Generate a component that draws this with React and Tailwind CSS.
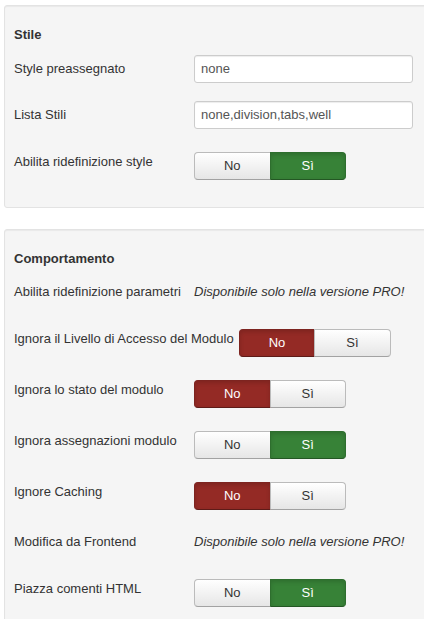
import React from 'react';

const Toggle = ({ value }) => {
  const off = 'bg-gradient-to-b from-white to-[#e6e6e6] text-[#333] border border-[#bbb] border-b-[#a2a2a2]';
  const no = value === 'no'
    ? 'bg-[#942a25] text-white border border-[#7d2420] border-b-[#5e1b18] shadow-[inset_0_2px_4px_rgba(0,0,0,0.15)]'
    : off;
  const si = value === 'si'
    ? 'bg-[#378237] text-white border border-[#2e6e2e] border-b-[#245724] shadow-[inset_0_2px_4px_rgba(0,0,0,0.15)]'
    : off;
  return (
    <div className="flex h-[28px] w-[152px] text-[13px] leading-[18px]">
      <div className={`flex-1 flex items-center justify-center rounded-l-[4px] ${no}`}>No</div>
      <div className={`flex-1 flex items-center justify-center rounded-r-[4px] -ml-px ${si}`}>Sì</div>
    </div>
  );
};

// wide: 23px under the row instead of 18
const Row = ({ label, children, toggle, input, wide, last }) => (
  <div className={`flex ${last ? '' : wide ? 'mb-[23px]' : 'mb-[18px]'}`}>
    <div className={`min-w-[180px] pr-[5px] text-[13px] leading-[18px] text-[#333] ${input ? 'pt-[5px]' : toggle ? 'pt-px' : ''}`}>
      {label}
    </div>
    <div className="h-[28px]">{children}</div>
  </div>
);

const Input = ({ value }) => (
  <div className="w-[219px] h-[28px] bg-white border border-[#ccc] rounded-[3px] px-[6px] flex items-center text-[13px] text-[#555] shadow-[inset_0_1px_1px_rgba(0,0,0,0.075)]">
    {value}
  </div>
);

const Pro = () => (
  <div className="text-[13px] leading-[18px] italic text-[#333]">Disponibile solo nella versione PRO!</div>
);

export default function App() {
  return (
    <div className="w-[424px] h-[619px] overflow-hidden bg-white pt-[5px] pl-[4px]" style={{ fontFamily: '"Liberation Sans", Arial, sans-serif' }}>
      <div className="w-[440px] bg-[#f5f5f5] border border-[#e3e3e3] rounded-[3px] pl-[9px] pt-[20px] pb-[27px] shadow-[inset_0_1px_1px_rgba(0,0,0,0.05)]">
        <h3 className="text-[13px] leading-[18px] font-bold text-[#333] mb-[11px]">Stile</h3>
        <Row label="Style preassegnato" input><Input value="none" /></Row>
        <Row label="Lista Stili" input wide><Input value="none,division,tabs,well" /></Row>
        <Row label="Abilita ridefinizione style" toggle last><Toggle value="si" /></Row>
      </div>

      <div className="mt-[21px] w-[440px] bg-[#f5f5f5] border border-[#e3e3e3] rounded-[3px] pl-[9px] pt-[20px] pb-[26px] shadow-[inset_0_1px_1px_rgba(0,0,0,0.05)]">
        <h3 className="text-[13px] leading-[18px] font-bold text-[#333] mb-[15px]">Comportamento</h3>
        <Row label="Abilita ridefinizione parametri"><Pro /></Row>
        <Row label="Ignora il Livello di Accesso del Modulo" toggle wide><Toggle value="no" /></Row>
        <Row label="Ignora lo stato del modulo" toggle wide><Toggle value="no" /></Row>
        <Row label="Ignora assegnazioni modulo" toggle wide><Toggle value="si" /></Row>
        <Row label="Ignore Caching" toggle wide><Toggle value="no" /></Row>
        <Row label="Modifica da Frontend"><Pro /></Row>
        <Row label="Piazza comenti HTML" toggle wide><Toggle value="si" /></Row>
      </div>
    </div>
  );
}
